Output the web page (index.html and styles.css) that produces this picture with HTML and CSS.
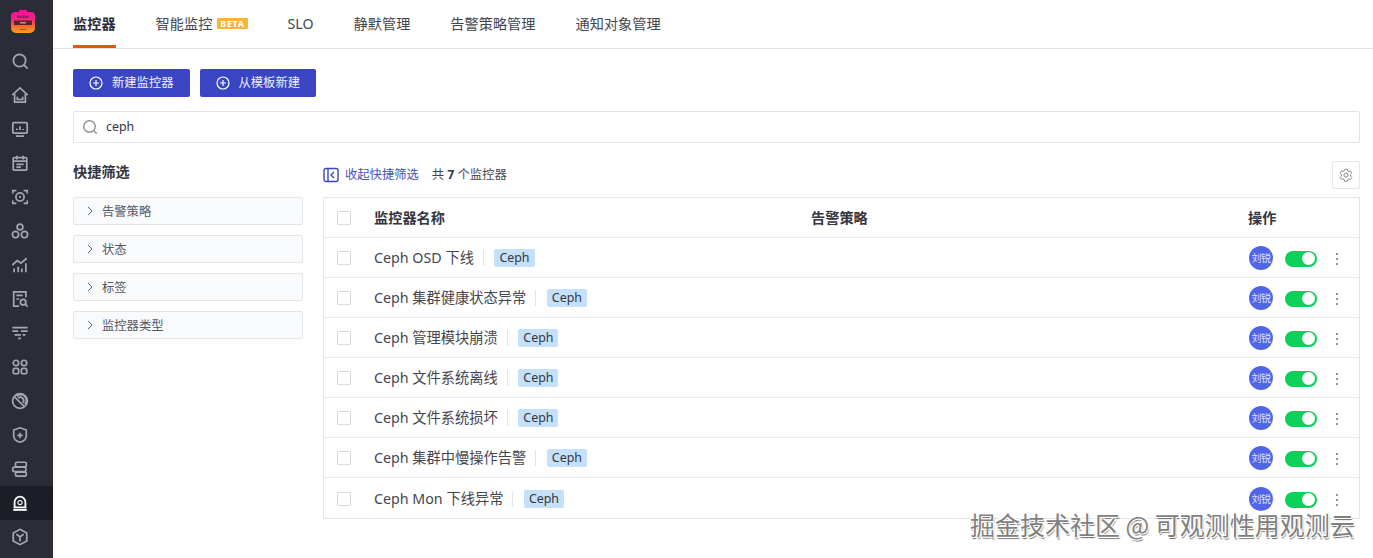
FILE: index.html
```html
<!DOCTYPE html>
<html lang="zh-CN">
<head>
<meta charset="utf-8">
<title>监控器</title>
<link rel="stylesheet" href="styles.css">
</head>
<body>
<div class="app">
  <aside class="sidebar">
    <div class="logo">
      <svg width="26" height="26" viewBox="0 0 26 26"><defs><linearGradient id="lg" x1="0" y1="0" x2="0" y2="1"><stop offset="0" stop-color="#e813a8"/><stop offset=".4" stop-color="#f4247e"/><stop offset=".7" stop-color="#f76a2c"/><stop offset="1" stop-color="#f9a01e"/></linearGradient></defs><path d="M9 2h8v2h4a4 4 0 0 1 4 4v12a5 5 0 0 1-5 5H6a5 5 0 0 1-5-5V8a4 4 0 0 1 4-4h4z" fill="url(#lg)"/><path d="M7 7.500h12v2.500H7z" fill="#a51a6c"/><path d="M4 12.500h18v4.500H4z" fill="#5a2230"/><path d="M10 14.800h6" stroke="#f7b08a" stroke-width="1.200"/><path d="M10 21.500h6" stroke="#b34a1c" stroke-width="1"/></svg>
    </div>
    <a class="nav"><svg viewBox="0 0 20 20"><circle cx="9.500" cy="9.500" r="6.800"/><path d="M14.500 14.500l4 4"/></svg></a>
    <a class="nav"><svg viewBox="0 0 20 20"><path d="M1.500 10L10 2l8.500 8M4 8.500V18h12V8.500"/><path d="M7 12v3h6v-3"/></svg></a>
    <a class="nav"><svg viewBox="0 0 20 20"><rect x="2" y="3" width="16" height="11.500" rx="1"/><path d="M5.500 18h9M6.500 11V9.500M10 11V7M13.500 11v-1" /></svg></a>
    <a class="nav"><svg viewBox="0 0 20 20"><rect x="2.500" y="4" width="15" height="14" rx="1"/><path d="M2.500 8h15M6.500 2v4M13.500 2v4M6 11.500h8M6 14.500h5"/></svg></a>
    <a class="nav"><svg viewBox="0 0 20 20"><path d="M2 6V3h4M14 3h4v3M18 14v3h-4M6 17H2v-3"/><circle cx="10" cy="10" r="4.500"/><path d="M10 8.500v2.500"/></svg></a>
    <a class="nav"><svg viewBox="0 0 20 20"><circle cx="10" cy="5.500" r="3.200"/><circle cx="5" cy="14" r="3.500"/><circle cx="15" cy="14" r="3.500"/></svg></a>
    <a class="nav"><svg viewBox="0 0 20 20"><path d="M1.500 10l5.500-5 4 3 6.500-5.500M3.500 18v-4M8 18v-6M12 18v-4M16.500 18V8"/></svg></a>
    <a class="nav"><svg viewBox="0 0 20 20"><path d="M16.500 8V2H3v16h6"/><path d="M6 6h7M6 10h3"/><circle cx="13.500" cy="13.500" r="3"/><path d="M15.500 15.500l3 3"/></svg></a>
    <a class="nav"><svg viewBox="0 0 20 20"><path d="M1.500 4h17M1.500 8h6.500M11 8h7.500M4 12h7M13 12h3M8 16h3"/></svg></a>
    <a class="nav"><svg viewBox="0 0 20 20"><rect x="2.500" y="2.500" width="6" height="6" rx="3"/><rect x="11.500" y="2.500" width="6" height="6" rx="3"/><rect x="2.500" y="11.500" width="6" height="6" rx="2"/><rect x="11.500" y="11.500" width="6" height="6" rx="2"/></svg></a>
    <a class="nav"><svg viewBox="0 0 20 20"><circle cx="10" cy="10" r="8.200"/><path d="M3.500 5l11 11M6.500 4.800a6 6 0 0 1 8.800 8.800M8 7a3.500 3.500 0 0 1 5 5"/></svg></a>
    <a class="nav"><svg viewBox="0 0 20 20"><path d="M10 2l7 2.500V11c0 3.500-3.500 6-7 7-3.500-1-7-3.500-7-7V4.500z"/><path d="M10 7.500v6M7 10.500h6"/></svg></a>
    <a class="nav"><svg viewBox="0 0 20 20"><rect x="5" y="2.500" width="12" height="5" rx="1.500"/><rect x="2" y="8" width="14.500" height="5" rx="1.500"/><rect x="5" y="13.500" width="12" height="4.500" rx="1.500"/></svg></a>
    <a class="nav active"><svg viewBox="0 0 20 20"><path d="M3 15.500V9a7 7 0 0 1 14 0v6.500z" fill="#fff" stroke="none"/><path d="M5 14V9a5 5 0 0 1 10 0v5z" fill="#1b1d27" stroke="none"/><circle cx="10" cy="9.500" r="2.300" stroke-width="1.200"/><path d="M2.500 17.500h15" stroke-width="2.400"/></svg></a>
    <a class="nav"><svg viewBox="0 0 20 20"><path d="M10 1.500l7.500 4v9l-7.500 4-7.500-4v-9z"/><path d="M6 7l4 3 4-3M10 10v5"/></svg></a>
  </aside>
  <main class="main">
    <nav class="tabs">
      <a class="tab current">监控器</a>
      <a class="tab">智能监控<span class="beta">BETA</span></a>
      <a class="tab">SLO</a>
      <a class="tab">静默管理</a>
      <a class="tab">告警策略管理</a>
      <a class="tab">通知对象管理</a>
    </nav>
    <div class="content">
      <div class="actions">
        <button class="btn"><svg class="plus" viewBox="0 0 14 14"><circle cx="7" cy="7" r="6"/><path d="M7 4v6M4 7h6"/></svg>新建监控器</button>
        <button class="btn"><svg class="plus" viewBox="0 0 14 14"><circle cx="7" cy="7" r="6"/><path d="M7 4v6M4 7h6"/></svg>从模板新建</button>
      </div>
      <div class="search">
        <svg class="search-icon" viewBox="0 0 16 16"><circle cx="7.500" cy="7.500" r="5.800"/><path d="M11.800 11.800l3 3"/></svg>
        <span>ceph</span>
      </div>
      <div class="columns">
        <section class="filters">
          <h2 class="filters-title">快捷筛选</h2>
          <div class="filter"><svg class="chev" viewBox="0 0 10 10"><path d="M3 1l4 4-4 4"/></svg>告警策略</div>
          <div class="filter"><svg class="chev" viewBox="0 0 10 10"><path d="M3 1l4 4-4 4"/></svg>状态</div>
          <div class="filter"><svg class="chev" viewBox="0 0 10 10"><path d="M3 1l4 4-4 4"/></svg>标签</div>
          <div class="filter"><svg class="chev" viewBox="0 0 10 10"><path d="M3 1l4 4-4 4"/></svg>监控器类型</div>
        </section>
        <section class="results">
          <div class="toolbar">
            <svg class="collapse" viewBox="0 0 16 16"><rect x="1" y="1.500" width="14" height="13" rx="2"/><path d="M5 1.500v13M11 5L8 8l3 3"/></svg>
            <a class="collapse-link">收起快捷筛选</a>
            <span class="count">共 <b>7</b> 个监控器</span>
            <button class="gear"><svg viewBox="0 0 16 16"><path d="M6.600 1.500h2.800l.5 1.900 1.500.9 1.900-.6 1.400 2.400-1.400 1.400v1.800l1.400 1.400-1.400 2.400-1.900-.6-1.500.9-.5 1.900H6.600l-.5-1.900-1.500-.9-1.900.6-1.400-2.400 1.400-1.400V7.100L1.300 5.700l1.400-2.400 1.900.6 1.500-.9z" stroke-linejoin="round"/><circle cx="8" cy="8" r="2.300"/></svg></button>
          </div>
          <div class="table">
            <div class="row head">
              <span class="check"></span>
              <span class="name-col">监控器名称</span>
              <span class="policy-col">告警策略</span>
              <span class="op-col">操作</span>
            </div>
            <div class="row"><span class="check"></span><div class="name-col"><span class="name">Ceph OSD 下线</span><span class="tag">Ceph</span></div><div class="op-col"><span class="avatar">刘锐</span><span class="switch"></span><span class="more"></span></div></div>
            <div class="row"><span class="check"></span><div class="name-col"><span class="name">Ceph 集群健康状态异常</span><span class="tag">Ceph</span></div><div class="op-col"><span class="avatar">刘锐</span><span class="switch"></span><span class="more"></span></div></div>
            <div class="row"><span class="check"></span><div class="name-col"><span class="name">Ceph 管理模块崩溃</span><span class="tag">Ceph</span></div><div class="op-col"><span class="avatar">刘锐</span><span class="switch"></span><span class="more"></span></div></div>
            <div class="row"><span class="check"></span><div class="name-col"><span class="name">Ceph 文件系统离线</span><span class="tag">Ceph</span></div><div class="op-col"><span class="avatar">刘锐</span><span class="switch"></span><span class="more"></span></div></div>
            <div class="row"><span class="check"></span><div class="name-col"><span class="name">Ceph 文件系统损坏</span><span class="tag">Ceph</span></div><div class="op-col"><span class="avatar">刘锐</span><span class="switch"></span><span class="more"></span></div></div>
            <div class="row"><span class="check"></span><div class="name-col"><span class="name">Ceph 集群中慢操作告警</span><span class="tag">Ceph</span></div><div class="op-col"><span class="avatar">刘锐</span><span class="switch"></span><span class="more"></span></div></div>
            <div class="row"><span class="check"></span><div class="name-col"><span class="name">Ceph Mon 下线异常</span><span class="tag">Ceph</span></div><div class="op-col"><span class="avatar">刘锐</span><span class="switch"></span><span class="more"></span></div></div>
          </div>
        </section>
      </div>
    </div>
  </main>
</div>
<div class="watermark">掘金技术社区 @ 可观测性用观测云</div>
</body>
</html>
```
FILE: styles.css
```css
* { box-sizing: border-box; }
html, body { margin: 0; height: 100%; overflow: hidden; }
body {
  background: #fff;
  color: #33353f;
  font: 13px/20px "Noto Sans", "Noto Sans CJK SC", sans-serif;
}
.app { display: flex; height: 558px; }
.sidebar {
  width: 53px;
  flex: none;
  background: #2a2c38;
  padding-top: 8px;
  display: flex;
  flex-direction: column;
}
.logo { height: 33px; padding-left: 10px; margin-bottom: 3px; }
.nav {
  height: 34px;
  display: flex;
  align-items: center;
  padding-left: 11px;
}
.nav svg {
  width: 18px;
  height: 18px;
  fill: none;
  stroke: #a6a8ae;
  stroke-width: 1.900;
}
.nav.active { background: #1b1d27; }
.nav.active svg { stroke: #fff; }
.main { flex: 1; min-width: 0; }
.tabs {
  height: 49px;
  border-bottom: 1px solid #e4e5e7;
  padding: 0 20px;
  display: flex;
  gap: 40px;
}
.tab {
  font-size: 14.200px;
  height: 48px;
  line-height: 48px;
  color: #44464f;
  white-space: nowrap;
}
.tab.current {
  font-weight: 700;
  color: #2a2c38;
  border-bottom: 3px solid #f1500f;
}
.beta {
  display: inline-block;
  margin-left: 5px;
  padding: 0 3px;
  height: 11px;
  line-height: 11px;
  font-size: 9px;
  font-weight: 700;
  color: #fff;
  background: #fbb534;
  border-radius: 1px;
  vertical-align: 2px;
  letter-spacing: .6px;
}
.content { padding: 20px 13px 0 20px; }
.actions { display: flex; gap: 10px; }
.btn {
  height: 28px;
  padding: 0 16px;
  display: flex;
  align-items: center;
  gap: 9px;
  border: 0;
  border-radius: 2px;
  background: #3a45c4;
  color: #eef0fb;
  font: 12.300px/28px "Noto Sans", "Noto Sans CJK SC", sans-serif;
}
.plus { width: 14px; height: 14px; fill: none; stroke: #fff; stroke-width: 1.200; }
.search {
  margin-top: 14px;
  height: 32px;
  border: 1px solid #e2e3e6;
  border-radius: 2px;
  display: flex;
  align-items: center;
  gap: 8px;
  padding-left: 8px;
  font-size: 12.400px;
  color: #33353f;
}
.search-icon { width: 16px; height: 16px; fill: none; stroke: #8f9197; stroke-width: 1.400; }
.columns { display: flex; gap: 20px; margin-top: 18px; }
.filters { width: 230px; flex: none; }
.filters-title {
  margin: 0 0 14px;
  height: 22px;
  font-size: 14.200px;
  line-height: 22px;
  font-weight: 700;
  color: #33353f;
}
.filter {
  height: 28px;
  margin-bottom: 10px;
  border: 1px solid #e4e5e7;
  border-radius: 2px;
  background: #f9fafb;
  display: flex;
  align-items: center;
  padding: 1px 0 0 11px;
  gap: 7px;
  font-size: 12.300px;
  color: #55575f;
}
.chev { width: 10px; height: 10px; margin-top: -2px; fill: none; stroke: #60626a; stroke-width: 1; }
.results { flex: 1; min-width: 0; }
.toolbar { height: 36px; display: flex; align-items: center; font-size: 12.300px; padding-bottom: 8px; }
.collapse { width: 16px; height: 16px; fill: none; stroke: #3a45c4; stroke-width: 1.400; }
.collapse-link { margin-left: 6px; color: #4650c8; }
.count { margin-left: 13px; font-size: 12.300px; color: #44464f; }
.count b { color: #33353f; }
.gear {
  margin-left: auto;
  width: 28px;
  height: 28px;
  padding: 0;
  border: 1px solid #e4e5e7;
  border-radius: 2px;
  background: #fff;
  display: flex;
  align-items: center;
  justify-content: center;
}
.gear svg { width: 14px; height: 14px; fill: none; stroke: #85878e; stroke-width: 1.100; }
.table { border: 1px solid #e4e5e7; }
.row {
  height: 40px;
  display: flex;
  align-items: center;
  padding-left: 13px;
  border-bottom: 1px solid #e8e9eb;
}
.row:last-child { border-bottom: 0; padding-top: 1px; }
.row.head { font-size: 14.200px; font-weight: 700; color: #33353f; }
.check {
  width: 14px;
  height: 14px;
  flex: none;
  border: 1px solid #d9dadd;
  border-radius: 1px;
  background: #fff;
}
.name-col {
  margin-left: 23px;
  display: flex;
  align-items: center;
  flex: none;
  width: 437px;
}
.policy-col { flex: 1; }
.row:not(.head) .name-col { flex: 1; width: auto; }
.name {
  font-size: 14.250px;
  color: #44464f;
  padding-right: 9px;
  border-right: 1px solid #e4e5e7;
  line-height: 16px;
}
.tag {
  margin-left: 10.500px;
  height: 18px;
  line-height: 18px;
  padding: 0 5px;
  border-radius: 2px;
  background: #c5e1f9;
  font-size: 12.400px;
  color: #33353f;
}
.op-col {
  width: 111px;
  flex: none;
  display: flex;
  align-items: center;
}
.avatar {
  width: 24px;
  height: 24px;
  margin-left: 1px;
  flex: none;
  border-radius: 50%;
  background: #5065e8;
  color: #dfe3fb;
  font-size: 10px;
  line-height: 24px;
  text-align: center;
  white-space: nowrap;
  letter-spacing: -.5px;
}
.switch {
  position: relative;
  margin: 2px 0 0 12px;
  width: 32px;
  height: 16px;
  flex: none;
  border-radius: 8px;
  background: #0bd05a;
}
.switch::after {
  content: "";
  position: absolute;
  right: 2px;
  top: 1.500px;
  width: 13px;
  height: 13px;
  border-radius: 50%;
  background: #fff;
}
.more {
  margin: 2px 0 0 19px;
  width: 2px;
  height: 2px;
  flex: none;
  border-radius: 50%;
  background: #6e7076;
  box-shadow: 0 -5px 0 #6e7076, 0 5px 0 #6e7076;
}
.watermark {
  position: absolute;
  left: 970px;
  top: 507px;
  font: 25px/34px "Noto Sans CJK SC", sans-serif;
  color: #7f7f7f;
  white-space: nowrap;
  text-shadow: 1px 1px 0 #fff, -1px -1px 0 #fff, 1px -1px 0 #fff, -1px 1px 0 #fff, 1px 2px 1px #666;
}
```
